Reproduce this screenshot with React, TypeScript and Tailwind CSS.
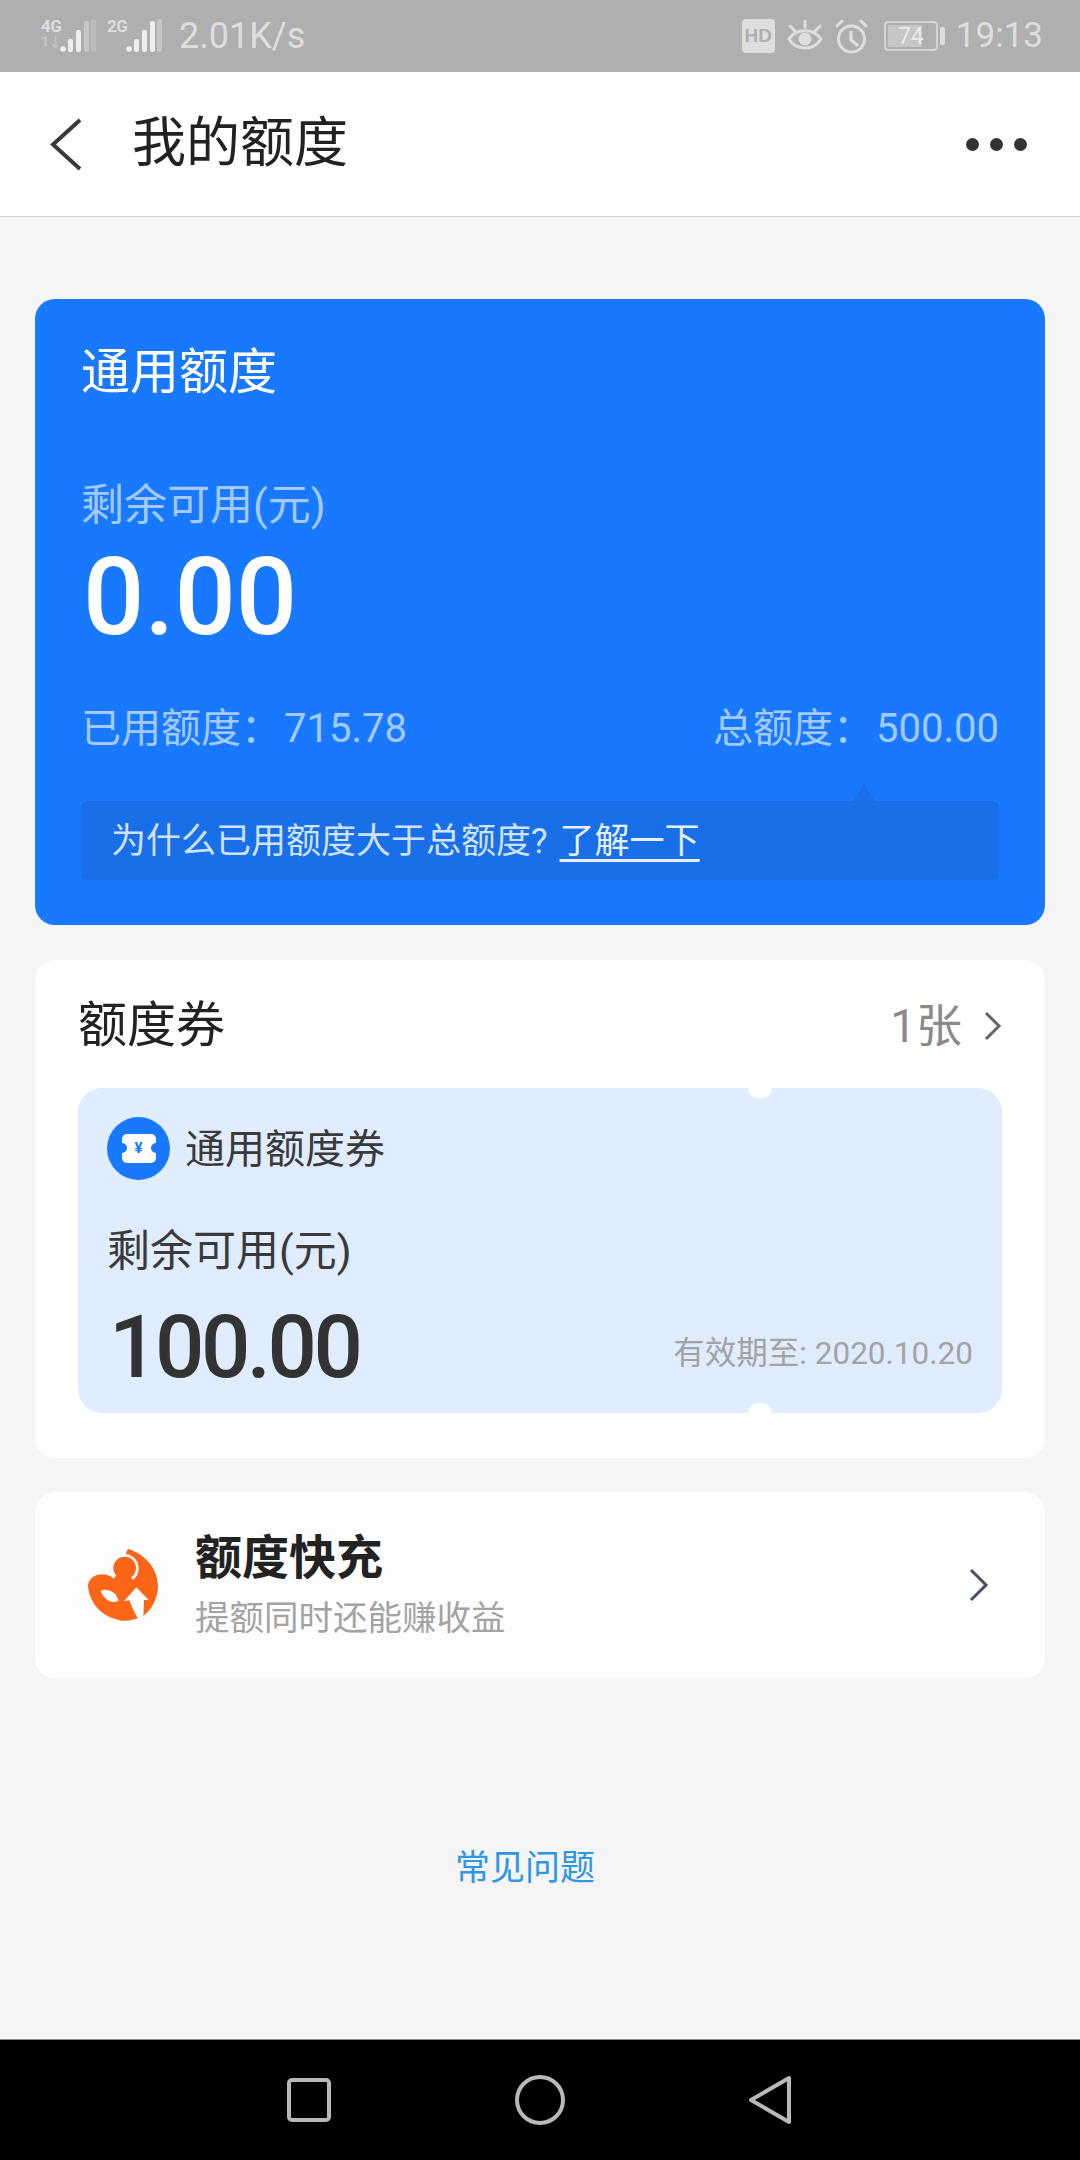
const cjk = "font-['Roboto','Noto_Sans_CJK_SC',sans-serif]";

function Signal({ label, faint, bars }: { label: string; faint?: boolean; bars: string[] }) {
  return (
    <div className="flex h-[36px] items-start">
      <div className="w-[18px] text-[17px] font-bold leading-[17px] tracking-[-0.5px] text-[#dedede]">
        {label}
        {faint && <div className="text-[14px] leading-[15px] text-[#c4c4c4]">1↓</div>}
      </div>
      <svg width="38" height="36" viewBox="0 0 38 36" fill="none">
        <circle cx="4" cy="31" r="2.8" fill="#eeeeee" />
        <rect x="9" y="21" width="5" height="13" rx="2" fill={bars[0]} />
        <rect x="17" y="12" width="5" height="22" rx="2" fill={bars[1]} />
        <rect x="25" y="3" width="5" height="31" rx="2" fill={bars[2]} />
        <rect x="32" y="1" width="5" height="33" rx="2" fill={bars[3]} />
      </svg>
    </div>
  );
}

function StatusBar() {
  return (
    <div className={`flex h-[72px] items-center bg-[#afafaf] pl-[41px] pr-[37px] text-[#dedede] ${cjk}`}>
      <Signal label="4G" faint bars={["#eeeeee", "#eeeeee", "#c6c6c6", "#bcbcbc"]} />
      <div className="w-[10px]" />
      <Signal label="2G" bars={["#eeeeee", "#eeeeee", "#eeeeee", "#c6c6c6"]} />
      <span className="ml-[16px] text-[36px] leading-[40px]">2.01K/s</span>
      <div className="flex-1" />
      <div className="flex h-[34px] w-[33px] items-center justify-center rounded-[4px] bg-[#dedede] font-['Liberation_Sans',sans-serif] text-[19px] font-bold text-[#afafaf]">
        HD
      </div>
      <svg className="ml-[12px]" width="36" height="34" viewBox="0 0 36 34" fill="none" stroke="#dedede" strokeWidth="3" strokeLinecap="round">
        <path d="M2 20 C9 9 27 9 34 20 C27 32 9 32 2 20 Z" />
        <circle cx="18" cy="20" r="6.5" fill="#dedede" stroke="none" />
        <path d="M18 2 V8 M3 7 L8 12 M33 7 L28 12" />
      </svg>
      <svg className="ml-[12px]" width="33" height="35" viewBox="0 0 33 35" fill="none" stroke="#dedede" strokeWidth="3" strokeLinecap="round">
        <circle cx="16.5" cy="20" r="13" />
        <path d="M16 13 V21 L22 26 M2 7 L7 2 M31 7 L26 2" />
      </svg>
      <div className="relative ml-[16px] flex h-[30px] w-[54px] items-center rounded-[4px] border-2 border-[#d4d4d4] p-[2px]">
        <div className="h-full w-[74%] bg-[#c6c6c6]" />
        <span className="absolute inset-0 flex items-center justify-center text-[23px] leading-none text-[#ececec]">74</span>
      </div>
      <div className="ml-[2px] h-[18px] w-[5px] rounded-[2px] bg-[#dedede]" />
      <span className="ml-[11px] text-[35px] leading-[40px]">19:13</span>
    </div>
  );
}

function Header() {
  return (
    <div className="flex h-[145px] items-center border-b border-[#d0d4d4] bg-white pl-[50px] pr-[53px]">
      <svg width="32" height="53" viewBox="0 0 32 53" fill="none" stroke="#3a3a3a" strokeWidth="4">
        <path d="M30 2 L3 26.5 L30 51" />
      </svg>
      <span className="ml-[50px] text-[54px] leading-[60px] text-[#222]">我的额度</span>
      <div className="flex-1" />
      <div className="flex gap-[11px]">
        <div className="h-[13px] w-[13px] rounded-full bg-[#333]" />
        <div className="h-[13px] w-[13px] rounded-full bg-[#333]" />
        <div className="h-[13px] w-[13px] rounded-full bg-[#333]" />
      </div>
    </div>
  );
}

function BlueCard() {
  return (
    <div className="mt-[82px] rounded-[20px] bg-[#1879ff] px-[46px] pb-[45px] pt-[49px]">
      <div className="text-[49px] leading-[49px] text-white">通用额度</div>
      <div className="mt-[88px] text-[43px] leading-[40px] text-[#a3c9ff]">剩余可用(元)</div>
      <div className="mt-[29px] ml-[2px] text-[108px] font-medium leading-[86px] text-white">0.00</div>
      <div className="mt-[69px] flex justify-between text-[40px] leading-[40px] text-[#a3c9ff]">
        <span>已用额度：<span className="ml-[3px]">715.78</span></span>
        <span>总额度：<span className="ml-[3px]">500.00</span></span>
      </div>
      <div className="relative mt-[52px] flex h-[79px] items-center rounded-[6px] bg-[#186fe8] pl-[30px] pt-[2px] text-[35px] leading-[40px] text-[#cfe2ff]">
        <div className="absolute right-[124px] top-[-18px] h-0 w-0 border-x-[11px] border-b-[18px] border-x-transparent border-b-[#186fe8]" />
        <span>为什么已用额度大于总额度?</span>
        <span className="ml-[12px] text-[#e6f0ff] underline underline-offset-[6px]">了解一下</span>
      </div>
    </div>
  );
}

function VoucherCard() {
  return (
    <div className="mt-[35px] rounded-[20px] bg-white px-[43px] pb-[45px] pt-[40px]">
      <div className="flex h-[50px] items-center pt-[2px]">
        <span className="text-[49px] leading-[50px] text-[#222]">额度券</span>
        <div className="flex-1" />
        <span className="text-[46px] leading-[50px] text-[#8a8a8a]">1张</span>
        <svg className="ml-[22px]" width="18" height="30" viewBox="0 0 18 30" fill="none" stroke="#666" strokeWidth="3">
          <path d="M2 2 L15 15 L2 28" />
        </svg>
      </div>
      <div className="relative mt-[38px] h-[325px] rounded-[24px] bg-[#e0ecff] px-[29px] pt-[29px]">
        <div className="absolute left-[670px] top-0 h-[10px] w-[24px] rounded-b-full bg-white" />
        <div className="absolute bottom-0 left-[670px] h-[10px] w-[24px] rounded-t-full bg-white" />
        <div className="flex items-center">
          <div className="flex h-[63px] w-[63px] items-center justify-center rounded-full bg-[#1879ff]">
            <div className="relative flex h-[29px] w-[34px] items-center justify-center rounded-[5px] bg-white text-[15px] font-bold leading-none text-[#1879ff]">
              <div className="absolute left-[-5px] top-[9px] h-[10px] w-[10px] rounded-full bg-[#1879ff]" />
              <div className="absolute right-[-5px] top-[9px] h-[10px] w-[10px] rounded-full bg-[#1879ff]" />
              ¥
            </div>
          </div>
          <span className="ml-[15px] pt-[3px] text-[40px] leading-[50px] text-[#3a3a3a]">通用额度券</span>
        </div>
        <div className="mt-[49px] text-[43px] leading-[44px] text-[#3a3a3a]">剩余可用(元)</div>
        <div className="mt-[36px] flex items-end justify-between">
          <span className="ml-[2px] text-[87px] font-medium leading-[76px] tracking-[-3.5px] text-[#333]">100.00</span>
          <span className="mb-[13px] text-[31.5px] leading-[36px] text-[#a3a3a3]">有效期至: 2020.10.20</span>
        </div>
      </div>
    </div>
  );
}

function PromoCard() {
  return (
    <div className="mt-[34px] flex h-[186px] items-center rounded-[20px] bg-[#fdfdfd] pl-[53px] pr-[56px]">
      <svg width="70" height="74" viewBox="0 0 210 222">
        <path
          fill="#fb6517"
          d="M120 2 C175 20 210 65 210 115 C210 150 190 190 160 208 C130 218 110 222 90 215 C40 205 5 165 0 115 C0 95 20 78 40 80 C60 78 70 88 80 90 Z"
        />
        <path fill="none" stroke="#fdfdfd" strokeWidth="10" d="M72 46 A39 39 0 1 1 132 92" />
        <path fill="#fdfdfd" d="M32 60 L120 0 L80 20 L72 50 L78 92 L60 78 L30 78 Z" />
        <circle cx="110" cy="60" r="34" fill="#fb6517" />
        <path fill="#fdfdfd" d="M145 118 L108 160 L124 157 L132 178 L150 213 L166 210 L168 155 L183 157 Z" />
        <path fill="#fdfdfd" d="M38 128 C58 120 85 132 92 158 C70 170 46 152 38 128 Z" />
      </svg>
      <div className="ml-[37px]">
        <div className="text-[47px] font-bold leading-[52px] text-[#222]">额度快充</div>
        <div className="mt-[14px] text-[34.5px] leading-[40px] text-[#a3a3a3]">提额同时还能赚收益</div>
      </div>
      <div className="flex-1" />
      <svg width="20" height="34" viewBox="0 0 20 34" fill="none" stroke="#4a4f63" strokeWidth="3">
        <path d="M2 2 L17 17 L2 32" />
      </svg>
    </div>
  );
}

function NavBar() {
  return (
    <div className="flex h-[121px] items-center justify-center border-t border-[#888] bg-black pr-[2px]">
      <div className="flex w-[505px] items-center justify-between">
        <svg width="44" height="44" viewBox="0 0 44 44" fill="none" stroke="#b8b8b8" strokeWidth="4">
          <rect x="2" y="2" width="40" height="40" rx="3" />
        </svg>
        <svg className="ml-[2px]" width="50" height="50" viewBox="0 0 50 50" fill="none" stroke="#b8b8b8" strokeWidth="4">
          <circle cx="25" cy="25" r="23" />
        </svg>
        <svg width="44" height="50" viewBox="0 0 44 50" fill="none" stroke="#b8b8b8" strokeWidth="4" strokeLinejoin="round">
          <path d="M41 3 V47 L3 25 Z" />
        </svg>
      </div>
    </div>
  );
}

export default function App() {
  return (
    <div className={`flex h-[2160px] w-[1080px] flex-col bg-[#f5f5f5] ${cjk}`}>
      <StatusBar />
      <Header />
      <div className="flex flex-1 flex-col px-[35px]">
        <BlueCard />
        <VoucherCard />
        <PromoCard />
        <div className="mt-[171px] pr-[30px] text-center text-[35px] leading-[40px] text-[#2d96e6]">常见问题</div>
      </div>
      <NavBar />
    </div>
  );
}
